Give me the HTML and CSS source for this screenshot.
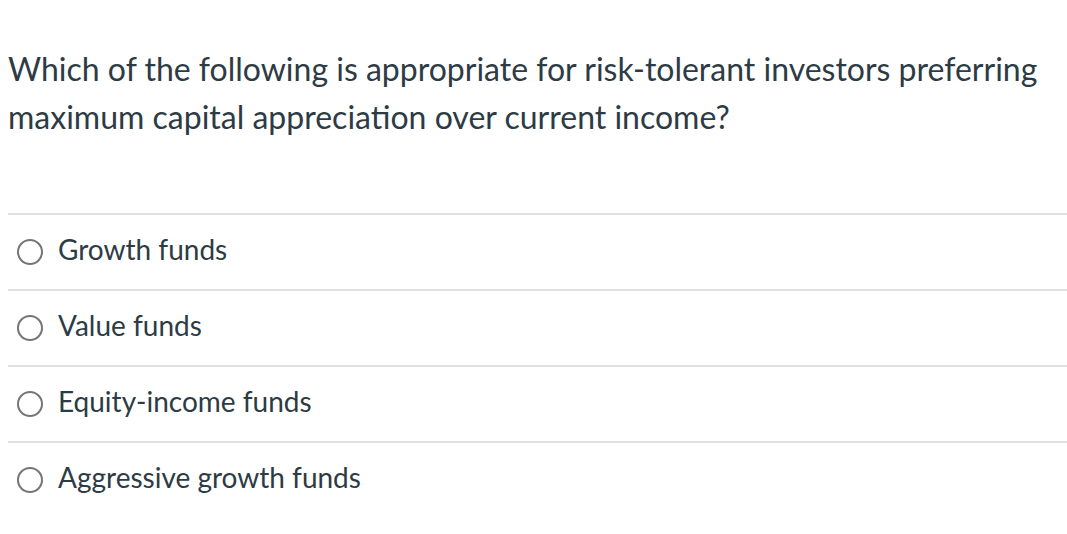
FILE: index.html
```html
<!DOCTYPE html>
<html>
<head>
<meta charset="utf-8">
<link rel="stylesheet" href="styles.css">
</head>
<body>
<div class="question">
  <p class="prompt">Which of the following is appropriate for risk-tolerant investors preferring maximum capital appreciation over current income?</p>
  <div class="answers">
    <label class="answer"><span class="radio"></span><span class="label">Growth funds</span></label>
    <label class="answer"><span class="radio"></span><span class="label">Value funds</span></label>
    <label class="answer"><span class="radio"></span><span class="label">Equity-income funds</span></label>
    <label class="answer"><span class="radio"></span><span class="label">Aggressive growth funds</span></label>
  </div>
</div>
</body>
</html>
```

FILE: styles.css
```css
html, body {
  margin: 0;
  padding: 0;
  background: #fff;
}
body {
  font-family: Lato, "Open Sans", sans-serif;
  color: #2d3b45;
}
.question {
  padding: 45px 0 0 8px;
}
.prompt {
  margin: 0;
  font-size: 32px;
  line-height: 48px;
  width: 1055px;
}
.answers {
  margin-top: 72px;
}
.answer {
  display: flex;
  align-items: center;
  height: 74px;
  border-top: 2px solid #e1e1e1;
}
.radio {
  width: 22px;
  height: 22px;
  border: 2px solid #757575;
  border-radius: 50%;
  margin-left: 9px;
  margin-right: 15px;
  flex: none;
}
.label {
  font-size: 28px;
  line-height: 32px;
  margin-top: -7px;
}
```
